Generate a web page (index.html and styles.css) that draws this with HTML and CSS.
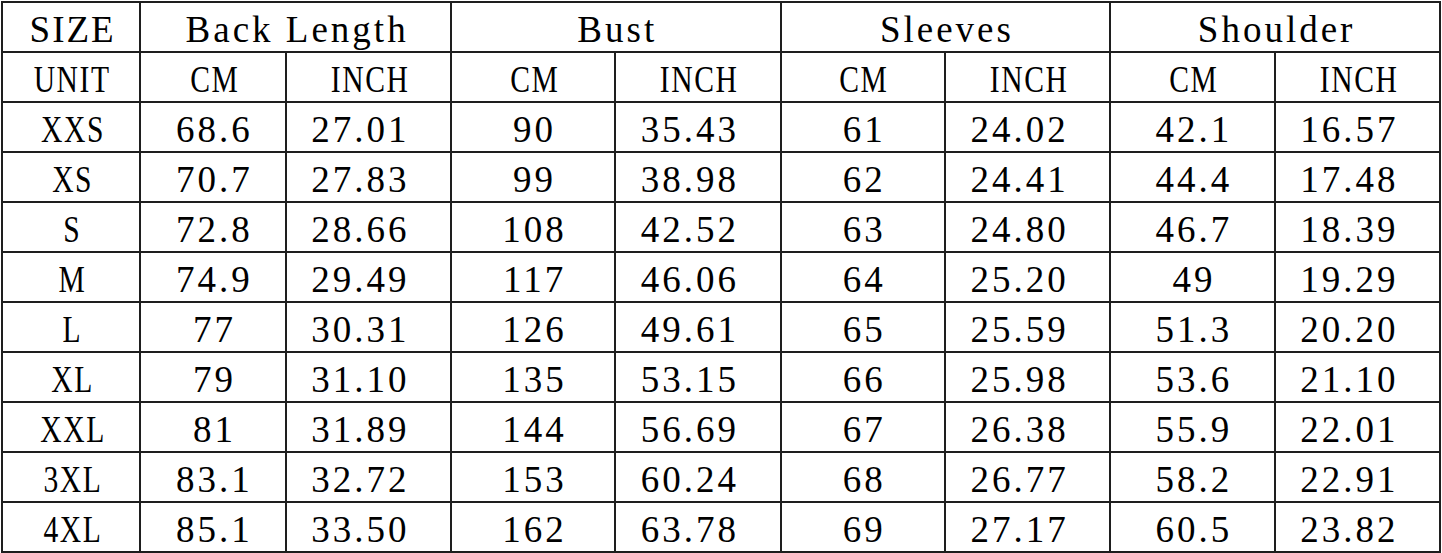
FILE: index.html
```html
<!DOCTYPE html>
<html>
<head>
<meta charset="utf-8">
<link rel="stylesheet" href="styles.css">
</head>
<body>
<table class="size-chart">
  <colgroup>
    <col class="c-size"><col class="c-a"><col class="c-b"><col class="c-c"><col class="c-b"><col class="c-c"><col class="c-b"><col class="c-c"><col class="c-b">
  </colgroup>
  <tr class="head"><td>SIZE</td><td colspan="2">Back Length</td><td colspan="2">Bust</td><td colspan="2">Sleeves</td><td colspan="2">Shoulder</td></tr>
  <tr class="unit"><td><span class="nw">UNIT</span></td><td><span class="nw">CM</span></td><td><span class="nw">INCH</span></td><td><span class="nw">CM</span></td><td><span class="nw">INCH</span></td><td><span class="nw">CM</span></td><td><span class="nw">INCH</span></td><td><span class="nw">CM</span></td><td><span class="nw">INCH</span></td></tr>
  <tr class="data"><td><span class="nw">XXS</span></td><td>68.6</td><td>27.01</td><td>90</td><td>35.43</td><td>61</td><td>24.02</td><td>42.1</td><td>16.57</td></tr>
  <tr class="data"><td><span class="nw">XS</span></td><td>70.7</td><td>27.83</td><td>99</td><td>38.98</td><td>62</td><td>24.41</td><td>44.4</td><td>17.48</td></tr>
  <tr class="data"><td><span class="nw">S</span></td><td>72.8</td><td>28.66</td><td>108</td><td>42.52</td><td>63</td><td>24.80</td><td>46.7</td><td>18.39</td></tr>
  <tr class="data"><td><span class="nw">M</span></td><td>74.9</td><td>29.49</td><td>117</td><td>46.06</td><td>64</td><td>25.20</td><td>49</td><td>19.29</td></tr>
  <tr class="data"><td><span class="nw">L</span></td><td>77</td><td>30.31</td><td>126</td><td>49.61</td><td>65</td><td>25.59</td><td>51.3</td><td>20.20</td></tr>
  <tr class="data"><td><span class="nw">XL</span></td><td>79</td><td>31.10</td><td>135</td><td>53.15</td><td>66</td><td>25.98</td><td>53.6</td><td>21.10</td></tr>
  <tr class="data"><td><span class="nw">XXL</span></td><td>81</td><td>31.89</td><td>144</td><td>56.69</td><td>67</td><td>26.38</td><td>55.9</td><td>22.01</td></tr>
  <tr class="data"><td><span class="nw">3XL</span></td><td>83.1</td><td>32.72</td><td>153</td><td>60.24</td><td>68</td><td>26.77</td><td>58.2</td><td>22.91</td></tr>
  <tr class="data"><td><span class="nw">4XL</span></td><td>85.1</td><td>33.50</td><td>162</td><td>63.78</td><td>69</td><td>27.17</td><td>60.5</td><td>23.82</td></tr>
</table>
</body>
</html>
```
FILE: styles.css
```css
html, body {
  margin: 0;
  padding: 0;
  background: #fff;
}
body {
  padding: 1px;
}
.size-chart {
  border-collapse: collapse;
  table-layout: fixed;
  width: 1440px;
  font-family: "Liberation Serif", "Times New Roman", serif;
  font-size: 37px;
  color: #000;
}
.c-size { width: 138px; }
.c-a { width: 145px; }
.c-b { width: 165px; }
.c-c { width: 164px; }
.size-chart tr {
  height: 50px;
}
.size-chart td {
  border: 2px solid #1e1e1e;
  height: 50px;
  padding: 6px 0 0 3px;
  text-align: center;
  vertical-align: middle;
  line-height: 40px;
  white-space: nowrap;
  letter-spacing: 3px;
  box-sizing: border-box;
}
.size-chart .data td:nth-child(odd):not(:first-child) {
  padding-right: 19px;
}
.size-chart .head td:first-child {
  letter-spacing: 2px;
}
.nw {
  display: inline-block;
  letter-spacing: 2px;
  transform: scaleX(0.8);
}
```
